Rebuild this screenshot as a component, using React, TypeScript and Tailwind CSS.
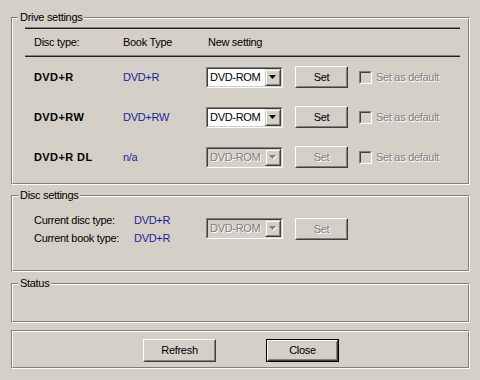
import React from "react";

const GRAY = "#808080";

function Group({
  label,
  className,
  children,
}: {
  label?: string;
  className?: string;
  children?: React.ReactNode;
}) {
  return (
    <div
      className={`relative border border-t-[#808080] border-l-[#808080] border-r-white border-b-white ${className ?? ""}`}
    >
      <div className="h-full border border-t-white border-l-white border-r-[#808080] border-b-[#808080]">
        {children}
      </div>
      {label && (
        <span className="absolute left-[6px] top-[-7px] bg-[#d4d0c8] px-[2px] leading-[13px] text-black">
          {label}
        </span>
      )}
    </div>
  );
}

function Btn({
  children,
  disabled,
  def,
  className,
}: {
  children: React.ReactNode;
  disabled?: boolean;
  def?: boolean;
  className?: string;
}) {
  const body = (
    <div className="h-full border border-t-white border-l-white border-r-[#404040] border-b-[#404040]">
      <div
        className={`flex h-full items-center justify-center border border-t-[#d4d0c8] border-l-[#d4d0c8] border-r-[#808080] border-b-[#808080] ${
          disabled ? "text-[#808080] [text-shadow:1px_1px_0_#ffffff]" : "text-black"
        }`}
      >
        {children}
      </div>
    </div>
  );
  if (def) {
    return <div className={`border border-black ${className ?? ""}`}>{body}</div>;
  }
  return <div className={className}>{body}</div>;
}

function Combo({ disabled }: { disabled?: boolean }) {
  return (
    <div className="h-[21px] w-[77px] border border-t-[#808080] border-l-[#808080] border-r-white border-b-white">
      <div
        className={`flex h-full border border-t-[#404040] border-l-[#404040] border-r-[#d4d0c8] border-b-[#d4d0c8] ${
          disabled ? "bg-[#d4d0c8]" : "bg-white"
        }`}
      >
        <div
          className={`flex flex-1 items-center pl-[2px] ${
            disabled ? "text-[#808080] [text-shadow:1px_1px_0_#ffffff]" : "text-black"
          }`}
        >
          DVD-ROM
        </div>
        <div className="h-full w-[16px] border border-t-[#d4d0c8] border-l-[#d4d0c8] border-r-[#404040] border-b-[#404040]">
          <div className="flex h-full items-center justify-center border border-t-white border-l-white border-r-[#808080] border-b-[#808080] bg-[#d4d0c8]">
            <svg width="8" height="5" viewBox="0 0 8 5">
              {disabled && <path d="M1 1h7L4.5 5z" fill="#ffffff" />}
              <path d="M0 0h7L3.5 4z" fill={disabled ? GRAY : "#000000"} />
            </svg>
          </div>
        </div>
      </div>
    </div>
  );
}

function Check() {
  return (
    <div className="flex items-center gap-[4px]">
      <div className="h-[13px] w-[13px] border border-t-[#808080] border-l-[#808080] border-r-white border-b-white">
        <div className="h-full border border-t-[#404040] border-l-[#404040] border-r-[#d4d0c8] border-b-[#d4d0c8] bg-[#d4d0c8]" />
      </div>
      <span className="text-[#808080] [text-shadow:1px_1px_0_#ffffff]">Set as default</span>
    </div>
  );
}

const rows = [
  { disc: "DVD+R", book: "DVD+R", disabled: false },
  { disc: "DVD+RW", book: "DVD+RW", disabled: false },
  { disc: "DVD+R DL", book: "n/a", disabled: true },
];

export default function App() {
  return (
    <div className="h-[380px] w-[480px] bg-[#d4d0c8] pl-[11px] pt-[17px] font-['Liberation_Sans',Arial,sans-serif] text-[11px] tracking-[-0.3px] text-black">
      <div className="flex w-[459px] flex-col">
        {/* Drive settings */}
        <Group label="Drive settings" className="h-[168px]">
          <div className="ml-[12px] mr-[8px] mt-[8px] h-[2px] border-t border-b border-t-[#808080] border-b-[#202020]" />
          <div className="grid h-[26px] grid-cols-[89px_83px_1fr] items-center pl-[21px]">
            <span>Disc type:</span>
            <span>Book Type</span>
            <span className="ml-[2px]">New setting</span>
          </div>
          <div className="ml-[12px] mr-[8px] h-[2px] border-t border-b border-t-[#808080] border-b-[#202020]" />
          {rows.map((r) => (
            <div
              key={r.disc}
              className="grid h-[40px] grid-cols-[89px_83px_89px_64px_1fr] items-center pl-[21px]"
            >
              <span className="font-bold tracking-[0.4px]">{r.disc}</span>
              <span className="text-[#1f1f9c]">{r.book}</span>
              <Combo disabled={r.disabled} />
              <Btn disabled={r.disabled} className="h-[22px] w-[53px]">
                Set
              </Btn>
              <Check />
            </div>
          ))}
        </Group>

        {/* Disc settings */}
        <Group label="Disc settings" className="mt-[10px] h-[77px]">
          <div className="flex pl-[21px]">
            <div className="mt-[14px] grid w-[172px] grid-cols-[100px_72px]">
              <span className="h-[18px] leading-[18px]">Current disc type:</span>
              <span className="h-[18px] leading-[18px] text-[#1f1f9c]">DVD+R</span>
              <span className="h-[18px] leading-[18px]">Current book type:</span>
              <span className="h-[18px] leading-[18px] text-[#1f1f9c]">DVD+R</span>
            </div>
            <div className="mt-[21px] flex items-start gap-[12px]">
              <Combo disabled />
              <Btn disabled className="h-[22px] w-[53px]">
                Set
              </Btn>
            </div>
          </div>
        </Group>

        {/* Status */}
        <Group label="Status" className="mt-[11px] h-[40px]" />

        {/* Buttons */}
        <Group className="mt-[7px] h-[39px]">
          <div className="mt-[7px] flex gap-[50px] pl-[130px]">
            <Btn className="h-[23px] w-[73px]">Refresh</Btn>
            <Btn def className="h-[23px] w-[73px]">
              Close
            </Btn>
          </div>
        </Group>
      </div>
    </div>
  );
}
